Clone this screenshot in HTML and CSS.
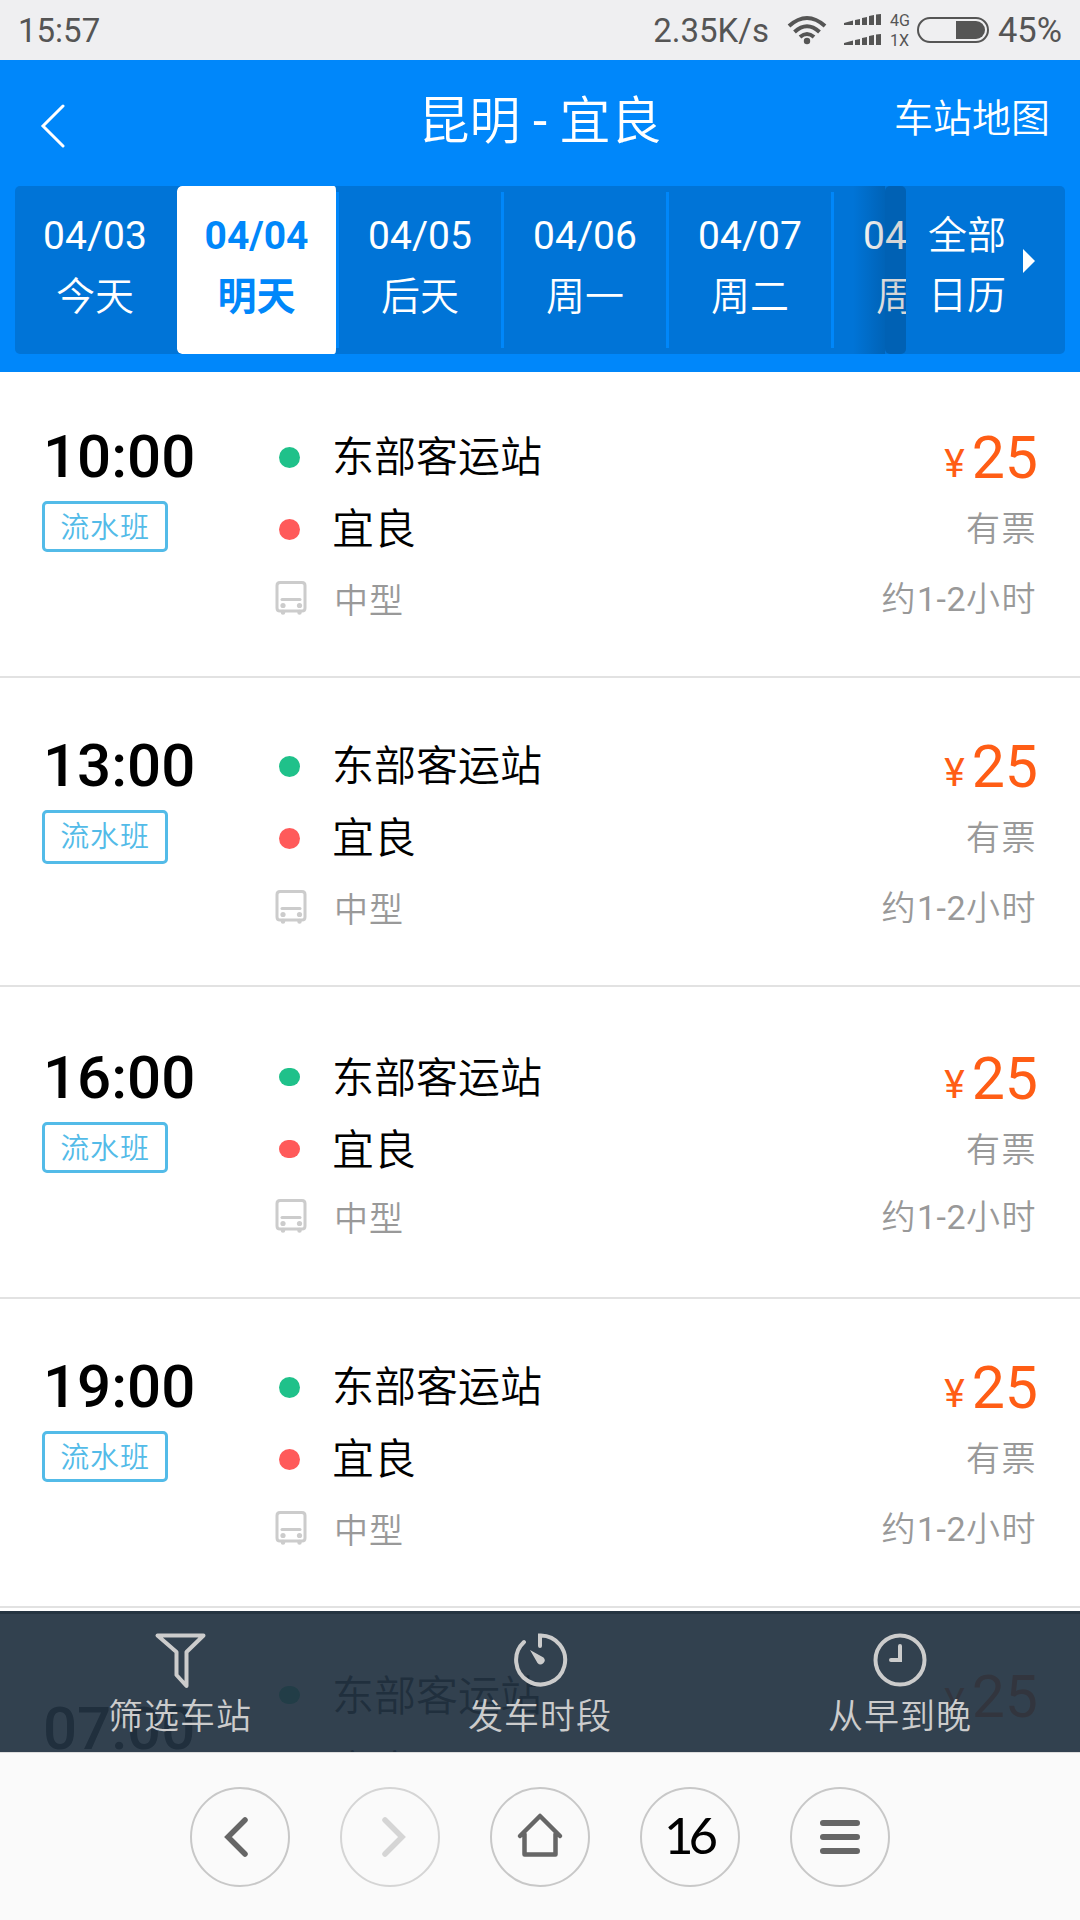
FILE: index.html
```html
<!DOCTYPE html>
<html lang="zh-CN">
<head>
<meta charset="utf-8">
<title>昆明 - 宜良</title>
<link rel="stylesheet" href="styles.css">
</head>
<body>
<svg class="defs" aria-hidden="true">
  <symbol id="bus" viewBox="0 0 32 36">
    <path fill="none" stroke="#ccc" stroke-width="3" d="M5 1.500H27Q30 1.500 30 4.500V27Q30 30 27 30H5Q2 30 2 27V4.500Q2 1.500 5 1.500Z"/>
    <path fill="none" stroke="#ccc" stroke-width="3" stroke-linecap="round" d="M7 18.500H25"/>
    <path fill="none" stroke="#ccc" stroke-width="4.500" stroke-linecap="round" d="M8 31V31.500M24.500 31V31.500"/>
    <circle cx="8" cy="24.500" r="2.600" fill="#ccc"/><circle cx="24.500" cy="24.500" r="2.600" fill="#ccc"/>
  </symbol>
</svg>
<div class="screen">
  <div class="status">
    <span class="clock">15:57</span>
    <span class="speed">2.35K/s</span>
    <svg class="wifi" width="40" height="30" viewBox="0 0 40 30"><g fill="none" stroke="#555" stroke-width="4"><path d="M2 11Q20 -5 38 11"/><path d="M7.500 17Q20 5.500 32.500 17"/><path d="M13 22Q20 16 27 22"/></g><circle cx="20" cy="26" r="3.200" fill="#555"/></svg>
    <svg class="signal" width="38" height="34" viewBox="0 0 38 34"><g fill="#555"><path d="M0 12V10L9 7.500V12ZM11 12V7L16 6V12ZM18 12V5L23 4V12ZM25 12V3L30 2V12ZM32 12V1.500L37 1V12Z"/><path d="M0 32V30L9 27.500V32ZM11 32V27L16 26V32ZM18 32V25L23 24V32ZM25 32V23L30 22V32ZM32 32V21.500L37 21V32Z"/></g></svg>
    <span class="net"><span>4G</span><span>1X</span></span>
    <svg class="battery" width="72" height="26" viewBox="0 0 72 26"><rect x="1" y="1" width="70" height="24" rx="12" fill="none" stroke="#555" stroke-width="2"/><path fill="#555" d="M39 4H59A9 9 0 0 1 59 22H39Z"/></svg>
    <span class="percent">45%</span>
  </div>

  <header class="header">
    <div class="titlebar">
      <svg class="back" width="26" height="44" viewBox="0 0 26 44"><path d="M23 2L3 22L23 42" fill="none" stroke="#fff" stroke-width="3" stroke-linecap="round"/></svg>
      <h1>昆明 <b>-</b> 宜良</h1>
      <a class="map">车站地图</a>
    </div>
    <div class="datebar">
      <div class="days">
        <div class="day first"><span>04/03</span><span>今天</span></div>
        <div class="day active"><span>04/04</span><span>明天</span></div>
        <div class="day"><span>04/05</span><span>后天</span></div>
        <div class="day"><span>04/06</span><span>周一</span></div>
        <div class="day"><span>04/07</span><span>周二</span></div>
        <div class="day"><span>04/08</span><span>周三</span></div>
        <div class="fade"></div>
        <div class="edge"></div>
      </div>
      <div class="calendar">
        <div class="cal-text"><span>全部</span><span>日历</span></div>
        <div class="arrow"></div>
      </div>
    </div>
  </header>

  <main class="list">
    <article class="trip">
      <div class="when"><div class="time">10:00</div><div class="tag">流水班</div></div>
      <div class="route">
        <div class="stop"><i class="dot from"></i>东部客运站</div>
        <div class="stop"><i class="dot to"></i>宜良</div>
        <div class="kind"><svg width="32" height="36"><use href="#bus"/></svg>中型</div>
      </div>
      <div class="fare"><div class="price"><small>¥</small>25</div><div class="left">有票</div><div class="dur">约<b>1-2</b>小时</div></div>
    </article>
    <article class="trip tall-tag">
      <div class="when"><div class="time">13:00</div><div class="tag">流水班</div></div>
      <div class="route">
        <div class="stop"><i class="dot from"></i>东部客运站</div>
        <div class="stop"><i class="dot to"></i>宜良</div>
        <div class="kind"><svg width="32" height="36"><use href="#bus"/></svg>中型</div>
      </div>
      <div class="fare"><div class="price"><small>¥</small>25</div><div class="left">有票</div><div class="dur">约<b>1-2</b>小时</div></div>
    </article>
    <article class="trip shifted">
      <div class="when"><div class="time">16:00</div><div class="tag">流水班</div></div>
      <div class="route">
        <div class="stop"><i class="dot from"></i>东部客运站</div>
        <div class="stop"><i class="dot to"></i>宜良</div>
        <div class="kind"><svg width="32" height="36"><use href="#bus"/></svg>中型</div>
      </div>
      <div class="fare"><div class="price"><small>¥</small>25</div><div class="left">有票</div><div class="dur">约<b>1-2</b>小时</div></div>
    </article>
    <article class="trip">
      <div class="when"><div class="time">19:00</div><div class="tag">流水班</div></div>
      <div class="route">
        <div class="stop"><i class="dot from"></i>东部客运站</div>
        <div class="stop"><i class="dot to"></i>宜良</div>
        <div class="kind"><svg width="32" height="36"><use href="#bus"/></svg>中型</div>
      </div>
      <div class="fare"><div class="price"><small>¥</small>25</div><div class="left">有票</div><div class="dur">约<b>1-2</b>小时</div></div>
    </article>
    <article class="trip plain">
      <div class="when"><div class="time">07:00</div></div>
      <div class="route">
        <div class="stop"><i class="dot from"></i>东部客运站</div>
        <div class="stop"><i class="dot to"></i>宜良</div>
      </div>
      <div class="fare"><div class="price"><small>¥</small>25</div></div>
    </article>

    <nav class="filters">
      <div class="filter">
        <svg width="56" height="56" viewBox="0 0 56 56"><path d="M5.500 3.500H51.500L34.500 20V54L24.500 43V20Z" fill="none" stroke="#ccc" stroke-width="4" stroke-linejoin="round"/></svg>
        <span>筛选车站</span>
      </div>
      <div class="filter">
        <svg width="56" height="56" viewBox="0 0 56 56"><path d="M12 10A24.500 24.500 0 1 0 28 3.500V14" fill="none" stroke="#ccc" stroke-width="4" stroke-linecap="round"/><path d="M18 18L31.500 25.500A4 4 0 1 1 25.500 31Z" fill="#ccc"/></svg>
        <span>发车时段</span>
      </div>
      <div class="filter">
        <svg width="56" height="56" viewBox="0 0 56 56"><g fill="none" stroke="#ccc" stroke-width="4" stroke-linecap="round"><circle cx="28" cy="28" r="24.500"/><path d="M28 14V28H19"/></g></svg>
        <span>从早到晚</span>
      </div>
    </nav>
  </main>

  <footer class="browser">
    <div class="btn"><svg width="60" height="60" viewBox="0 0 60 60"><path d="M35 13L18 30L35 47" fill="none" stroke="#666" stroke-width="5.500" stroke-linecap="round"/></svg></div>
    <div class="btn off"><svg width="60" height="60" viewBox="0 0 60 60"><path d="M25 13L42 30L25 47" fill="none" stroke="#d5d5d5" stroke-width="5.500" stroke-linecap="round"/></svg></div>
    <div class="btn"><svg width="60" height="60" viewBox="0 0 60 60"><path d="M10 29L30 9L50 29M14.500 27V47.500H45.500V27" fill="none" stroke="#666" stroke-width="4.500" stroke-linecap="round" stroke-linejoin="round"/></svg></div>
    <div class="btn tabs">16</div>
    <div class="btn"><svg width="60" height="60" viewBox="0 0 60 60"><path d="M13 16H47M13 30H47M13 44H47" fill="none" stroke="#666" stroke-width="6" stroke-linecap="round"/></svg></div>
  </footer>
</div>
</body>
</html>
```
FILE: styles.css
```css
* { box-sizing: border-box; margin: 0; padding: 0; }
body { width: 1080px; background: #fff; font-family: Roboto, "Noto Sans CJK SC", sans-serif; }
.defs { display: none; }
.screen { width: 1080px; height: 1920px; overflow: hidden; display: flex; flex-direction: column; }

.status { height: 60px; background: #efeff1; color: #555; display: flex; align-items: center; padding: 0 18px 0 18px; font-size: 33px; }
.clock { flex: 1; }
.speed { margin-right: 18px; }
.wifi { margin-right: 17px; }
.signal { margin-right: 8px; }
.net { display: flex; flex-direction: column; font-size: 16px; line-height: 20px; width: 27px; padding-top: 1px; }
.battery { margin-right: 9px; }
.percent { font-size: 34.5px; }

.header { height: 312px; background: #0087fa; color: #fff; padding: 0 15px; }
.titlebar { height: 126px; display: grid; grid-template-columns: 200px 1fr 200px; padding: 0 15px; }
.back { margin: 44px 0 0 10px; }
h1 { font: 350 51px/124px Roboto, "Noto Sans CJK SC", sans-serif; text-align: center; }
h1 b { font-weight: 400; }
.map { font-size: 39px; font-weight: 350; line-height: 118px; text-align: right; white-space: nowrap; }

.datebar { height: 168px; display: flex; border-radius: 5px; overflow: hidden; background: #0074d7; }
.days { width: 891px; display: flex; position: relative; overflow: hidden; }
.day { flex: none; width: 165px; display: flex; flex-direction: column; align-items: center; padding: 20px 0 0 0; font-size: 39px; line-height: 61px; position: relative; border: solid transparent; border-width: 0 3px 0 0; }
.day span + span { font-weight: 350; line-height: 60px; }
.day::after { content: ""; position: absolute; right: -3px; top: 6px; width: 3px; height: 156px; background: #0087fa; }
.day.first { width: 162px; border-right: 0; padding-right: 2px; }
.day.first::after { display: none; }
.day.active { width: 162px; color: #0087fa; font-weight: 700; background: #fff padding-box; border-radius: 5px; }
.day.active span { font-weight: 700; }
.fade, .edge { position: absolute; top: 0; bottom: 0; }
.fade { left: 838px; width: 32px; background: linear-gradient(90deg, rgba(0,0,0,0), rgba(0,0,0,.15)); }
.edge { left: 870px; width: 21px; border-radius: 5px; background: rgba(0,0,0,.16); }
.calendar { flex: 1; display: flex; padding: 20px 30px 0 22px; font-size: 39px; font-weight: 350; line-height: 60px; }
.cal-text { display: flex; flex-direction: column; flex: 1; }
.arrow { margin-top: 43px; height: 0; border: 12px solid transparent; border-left-color: #fff; border-right: 0; }

.list { height: 1380px; position: relative; overflow: hidden; }
.trip { height: 309px; border-bottom: 2px solid #e2e2e2; display: grid; grid-template-columns: 235px 1fr auto; padding: 43px 42px 0 42px; }
.trip:first-child { margin-top: -3px; }
.time { font-size: 60px; font-weight: 500; line-height: 86px; padding: 2px 0 0 1px; }
.tag { width: 126px; height: 51px; border: 3px solid #53bbe8; border-radius: 5px; color: #53bbe8; font-size: 29px; letter-spacing: .8px; font-weight: 350; line-height: 48px; text-align: center; margin-top: 1px; }
.stop { display: flex; align-items: center; font-size: 42px; font-weight: 350; line-height: 72px; height: 72px; }
.route { padding-top: 10px; color: #000; }
.dot { width: 21px; height: 21px; border-radius: 50%; margin: -2px 32px 0 2px; }
.from { background: #1fc18a; }
.to { background: #ff5a5a; }
.kind { display: flex; align-items: center; font-size: 34px; letter-spacing: 1px; font-weight: 350; color: #999; height: 64px; }
.kind svg { margin: 2px 27px 0 -2px; }
.fare { text-align: right; font-weight: 350; font-size: 34px; color: #999; }
.fare b { font-weight: 400; letter-spacing: .5px; }
.price { font-size: 59px; font-weight: 400; line-height: 86px; color: #ff5d15; padding-top: 3px; }
.price small { font-size: 39px; margin-right: 7px; position: relative; top: -1px; }
.left, .dur { letter-spacing: 1.5px; margin-right: 1px; }
.left { line-height: 42px; }
.dur { line-height: 99px; }
.tall-tag .tag { height: 54px; }
.shifted { height: 312px; padding-top: 46px; }
.shifted .dot, .plain .dot { height: 18px; border-radius: 9px; margin-top: -5px; }
.shifted .kind, .shifted .dur { margin-top: -3px; }
.plain .when { padding-top: 33px; }
.plain .stop + .stop { margin-top: 3px; }

.filters { position: absolute; left: 0; right: 0; bottom: 0; height: 141px; background: rgba(34,51,66,.93); border-top: 3px solid #253441; display: flex; padding-top: 18px; }
.filter { flex: 1; display: flex; flex-direction: column; align-items: center; color: #ccc; font-size: 35px; letter-spacing: 1px; font-weight: 350; line-height: 59px; }

.browser { height: 168px; background: #fafafa; border-top: 1px solid #ddd; display: flex; justify-content: center; gap: 50px; padding-top: 34px; }
.btn { width: 100px; height: 100px; border: 2px solid #c8c8c8; border-radius: 50%; display: flex; align-items: center; justify-content: center; }
.off { border-color: #d5d5d5; }
.tabs { font: 400 51px Lato, sans-serif; letter-spacing: -5px; padding: 0 3px 5px 0; color: #000; }
```
